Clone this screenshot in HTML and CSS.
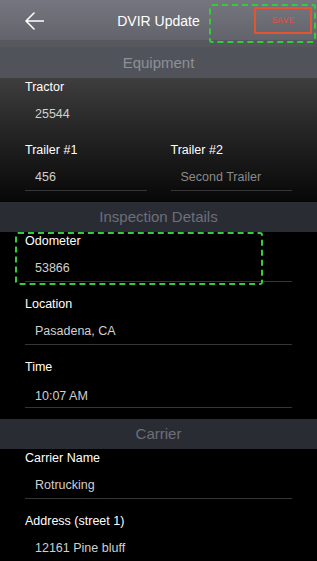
FILE: index.html
```html
<!DOCTYPE html>
<html lang="en">
<head>
  <meta charset="UTF-8">
  <title>DVIR Update</title>
  <link rel="stylesheet" href="styles.css">
</head>
<body>
  <div id="screen">
    <div class="nav">
      <div class="nav-back">
        <svg width="20" height="18" viewBox="0 0 20 18">
          <path d="M10 1 L2 9 L10 17 M2 9 L19.5 9" fill="none" stroke="#fff" stroke-width="1.6" stroke-linecap="round" stroke-linejoin="round"/>
        </svg>
      </div>
      <div class="nav-title">DVIR Update</div>
      <div class="nav-save">SAVE</div>
      <div class="mark mark-save"></div>
    </div>
    <div class="nav-band"></div>

    <div class="section-bar bar-light">Equipment</div>
    <div class="section section-equipment">
      <div class="field">
        <div class="field-label">Tractor</div>
        <div class="field-value no-line">25544</div>
      </div>
      <div class="field-row">
        <div class="field">
          <div class="field-label">Trailer #1</div>
          <div class="field-value">456</div>
        </div>
        <div class="field">
          <div class="field-label">Trailer #2</div>
          <div class="field-value placeholder">Second Trailer</div>
        </div>
      </div>
    </div>

    <div class="section-bar">Inspection Details</div>
    <div class="section">
      <div class="field">
        <div class="field-label">Odometer</div>
        <div class="field-value">53866</div>
        <div class="mark mark-odometer"></div>
      </div>
      <div class="field">
        <div class="field-label">Location</div>
        <div class="field-value">Pasadena, CA</div>
      </div>
      <div class="field">
        <div class="field-label">Time</div>
        <div class="field-value low">10:07 AM</div>
      </div>
    </div>

    <div class="section-bar">Carrier</div>
    <div class="section">
      <div class="field">
        <div class="field-label">Carrier Name</div>
        <div class="field-value">Rotrucking</div>
      </div>
      <div class="field">
        <div class="field-label">Address (street 1)</div>
        <div class="field-value">12161 Pine bluff</div>
      </div>
    </div>
  </div>
</body>
</html>
```

FILE: styles.css
```css
body {
  margin: 0;
  background: #000;
  font-family: "Liberation Sans", Arial, sans-serif;
}

#screen {
  width: 317px;
  height: 561px;
  overflow: hidden;
  position: relative;
}

/* barra superior */
.nav {
  position: relative;
  height: 40px;
  display: grid;
  grid-template-columns: 1fr auto 1fr;
  align-items: center;
  background: linear-gradient(#75767f, #62636b);
}

.nav-back {
  padding-left: 24px;
  display: flex;
  align-items: center;
  padding-top: 2px;
}

.nav-title {
  color: #fff;
  font-size: 14px;
  padding-top: 2px;
}

.nav-save {
  justify-self: end;
  margin-right: 5px;
  width: 58px;
  height: 27px;
  box-sizing: border-box;
  border: 2px solid #e2552f;
  color: #e8503a;
  font-size: 8.5px;
  display: flex;
  align-items: center;
  justify-content: center;
  letter-spacing: 0.3px;
}

.nav-band {
  height: 7px;
  background: #57585e;
}

/* marcas verdes */
.mark {
  position: absolute;
  border: 2px dashed #34cc3c;
  border-radius: 3px;
  box-sizing: border-box;
}

.mark-save {
  left: 209px;
  top: 4px;
  width: 107px;
  height: 39px;
}

.mark-odometer {
  left: -10px;
  top: 0;
  width: 248px;
  height: 53px;
}

/* secciones */
.section-bar {
  height: 30px;
  line-height: 30px;
  text-align: center;
  font-size: 15px;
  background: #2a2c34;
  color: #6d6f78;
}

.bar-light {
  height: 31px;
  line-height: 31px;
  background: #51535a;
  color: #8e9097;
}

.section {
  padding: 0 25px;
}

.section-equipment {
  background: linear-gradient(#3e3e3e, #2c2c2c 30%, #070707);
}

.field {
  position: relative;
  margin-bottom: 13px;
}

.section > .field:last-child,
.section > .field-row:last-child .field {
  margin-bottom: 11px;
}

.field-row {
  display: grid;
  grid-template-columns: 1fr 1fr;
  gap: 24px;
}

.field-label {
  color: #fff;
  font-size: 12.5px;
  line-height: 16px;
  padding-top: 1px;
}

.field-value {
  height: 33px;
  box-sizing: border-box;
  padding: 12px 0 0 10px;
  line-height: 14px;
  font-size: 12.5px;
  color: #d0d0d0;
  border-bottom: 1px solid #363636;
}

.field-value.no-line {
  border-bottom-color: transparent;
}

.field-value.placeholder {
  color: #8a8a8a;
}

.field-value.low {
  padding-top: 14px;
}
```
